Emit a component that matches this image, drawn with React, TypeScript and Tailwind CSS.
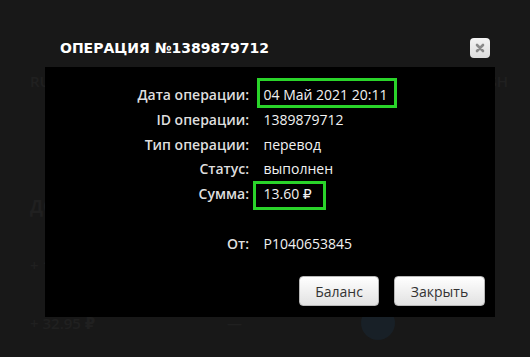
import React from 'react';

const rows: { label: string; value: string; box?: 'date' | 'sum' }[] = [
  { label: 'Дата операции:', value: '04 Май 2021 20:11', box: 'date' },
  { label: 'ID операции:', value: '1389879712' },
  { label: 'Тип операции:', value: 'перевод' },
  { label: 'Статус:', value: 'выполнен' },
  { label: 'Сумма:', value: '13.60 ₽', box: 'sum' },
  { label: '', value: '' },
  { label: 'От:', value: 'P1040653845' },
];

function Highlight({ kind }: { kind: 'date' | 'sum' }) {
  // зелёная рамка поверх значения
  const pos =
    kind === 'date'
      ? '-left-[7px] -right-[10px] -top-[7px] -bottom-[4px]'
      : '-left-[11px] -right-[14px] -top-[3px] -bottom-[7px]';
  return <span className={`absolute ${pos} border-[3px] border-[#2ad42a]`} />;
}

export default function App() {
  return (
    <div
      className="relative w-[530px] h-[357px] overflow-hidden bg-[#181818]"
      style={{ fontFamily: '"Open Sans", "DejaVu Sans", sans-serif' }}
    >
      {/* страница под модалкой */}
      <div className="flex flex-col px-[30px] text-[#202020] text-[15px] font-semibold">
        <div className="flex justify-between mt-[72px] h-[18px] leading-[18px]">
          <span>RUB</span>
          <span className="-mr-[8px]">CASH</span>
        </div>
        <div className="mt-[104px] text-[17px] font-bold">ДОПОЛНИТЕЛЬНО</div>
        <div className="mt-[34px]">+ 10.00 ₽</div>
        <div className="flex items-center mt-[30px] h-[34px]">
          <span className="w-[197px]">+ 32.95 ₽</span>
          <span>—</span>
          <span className="ml-[119px] w-[34px] h-[34px] rounded-full bg-[#182027]" />
        </div>
      </div>

      {/* модалка */}
      <div className="absolute inset-0 flex pl-[45px] pt-[30px]">
        <div className="w-[450px] flex flex-col">
          <div className="h-[37px] flex items-center justify-between pl-[15px] pr-[5px]">
            <span
              className="text-white text-[14px] font-bold"
              style={{ fontFamily: '"DejaVu Sans", sans-serif' }}
            >
              ОПЕРАЦИЯ №1389879712
            </span>
            <button className="w-[20px] h-[20px] rounded-[4px] bg-gradient-to-b from-[#f4f4f4] to-[#dcdcdc] flex items-center justify-center mb-[1px]">
              <svg width="10" height="10" viewBox="0 0 10 10">
                <path d="M2 2 L8 8 M8 2 L2 8" stroke="#8a8a8a" strokeWidth="2.6" strokeLinecap="round" />
              </svg>
            </button>
          </div>

          <div className="h-[250px] bg-black flex flex-col pt-[16px]">
            <div className="grid grid-cols-[204px_1fr] gap-x-[14.5px] text-[14px] leading-[24.8px]">
              {rows.map((r, i) => (
                <React.Fragment key={i}>
                  <div className="text-right text-[#dedede] font-semibold h-[24.8px]">{r.label}</div>
                  <div className="text-[#f2f2f2] h-[24.8px]">
                    <span className="relative">
                      {r.value}
                      {r.box && <Highlight kind={r.box} />}
                    </span>
                  </div>
                </React.Fragment>
              ))}
            </div>

            <div className="mt-auto mb-[11px] mr-[10px] flex justify-end gap-[15px]">
              <button className="w-[80px] h-[30px] rounded-[4px] border border-[#b8b8b8] bg-gradient-to-b from-[#ffffff] to-[#e2e2e2] text-[#333] text-[14px]">
                Баланс
              </button>
              <button className="w-[91px] h-[30px] rounded-[4px] border border-[#b8b8b8] bg-gradient-to-b from-[#ffffff] to-[#e2e2e2] text-[#333] text-[14px]">
                Закрыть
              </button>
            </div>
          </div>
        </div>
      </div>
    </div>
  );
}
